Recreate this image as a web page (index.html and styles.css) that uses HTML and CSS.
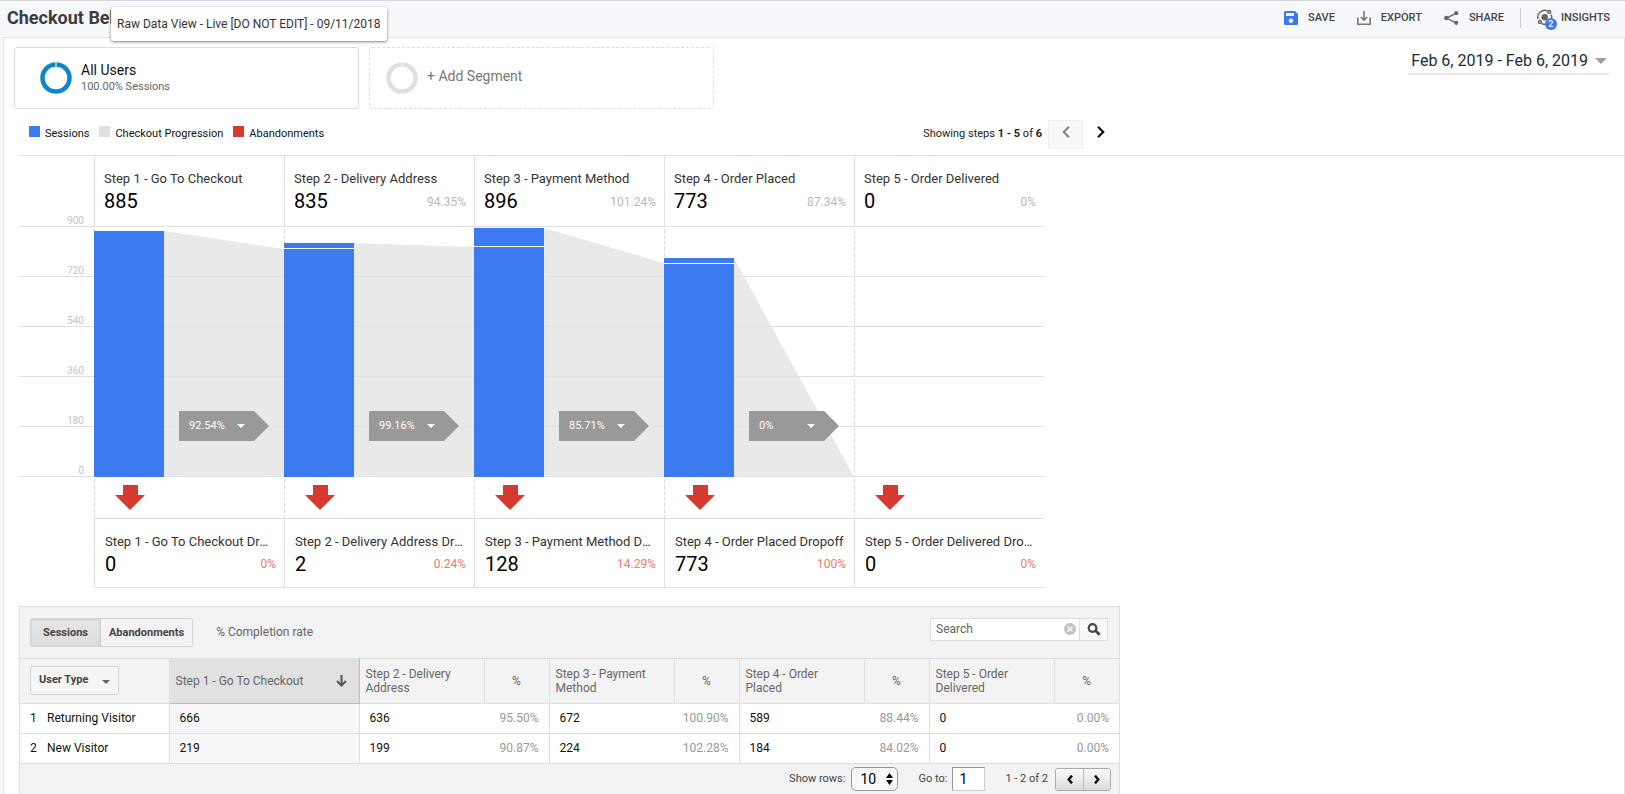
FILE: index.html
```html
<!DOCTYPE html>
<html lang="en">
<head>
<meta charset="utf-8">
<title>Checkout Behavior Analysis</title>
<meta name="viewport" content="width=device-width, initial-scale=1">
<link rel="stylesheet" href="styles.css">
</head>
<body>
<header class="topbar">
  <div class="title-wrap">
    <h1 class="title">Checkout Behavior Analysis</h1>
    <div class="tooltip" role="tooltip">Raw Data View - Live [DO NOT EDIT] - 09/11/2018</div>
  </div>
  <nav class="actions">
    <button class="action" type="button">
      <svg width="14" height="14" viewBox="0 0 14 14"><path fill="#3b78f0" fill-rule="evenodd" d="M1.500 0H11l3 3v9.500a1.500 1.500 0 0 1-1.500 1.500h-11A1.500 1.500 0 0 1 0 12.500v-11A1.500 1.500 0 0 1 1.500 0zM2 2v3h8V2zM7 7.500a2.300 2.300 0 1 0 .01 0z"/></svg>
      SAVE</button>
    <button class="action" type="button">
      <svg width="14" height="14" viewBox="0 0 14 14"><path fill="none" stroke="#757575" stroke-width="1.600" d="M.8 6.500v6.700h12.400V6.500M7 0v9M3.800 6l3.200 3.200L10.200 6"/></svg>
      EXPORT</button>
    <button class="action" type="button">
      <svg width="15" height="14" viewBox="0 0 15 14"><path fill="none" stroke="#666" stroke-width="1.400" d="M12 2.300 2.500 7 12 11.800"/><circle cx="12.200" cy="2.200" r="2.100" fill="#666"/><circle cx="2.300" cy="7" r="2.200" fill="#666"/><circle cx="12.200" cy="11.800" r="2.100" fill="#666"/></svg>
      SHARE</button>
    <span class="divider"></span>
    <button class="action insights" type="button">
      <span class="insight-icon">
        <svg width="16" height="17" viewBox="0 0 16 17"><g fill="none" stroke="#666" stroke-width="1.500"><path d="M1 10A7 7 0 0 1 10.500 1.900M14 5.500a7 7 0 0 1 .5 4.500M4.600 14.300a7 7 0 0 0 5 1"/><circle cx="12.300" cy="2.900" r="1.400"/><circle cx="2.900" cy="13" r="1.400"/></g><circle cx="7.700" cy="8.300" r="3.200" fill="#666"/></svg>
        <span class="badge">2</span>
      </span>
      INSIGHTS</button>
  </nav>
</header>

<main class="panel">
  <section class="segments">
    <button class="segment" type="button">
      <svg class="ring" width="32" height="32" viewBox="0 0 32 32"><circle cx="16" cy="16" r="13.500" fill="none" stroke="#0d85c7" stroke-width="4.500"/><path stroke="#fff" d="M16 0v5"/></svg>
      <span class="segment-text"><span class="segment-name">All Users</span><span class="segment-sub">100.00% Sessions</span></span>
    </button>
    <button class="segment segment-add" type="button">
      <svg class="ring" width="32" height="32" viewBox="0 0 32 32"><circle cx="16" cy="16" r="13.500" fill="none" stroke="#e0e0e0" stroke-width="4.500"/><path stroke="#fff" d="M16 0v5"/></svg>
      <span class="segment-name">+ Add Segment</span>
    </button>
    <button class="date" type="button">Feb 6, 2019 - Feb 6, 2019
      <svg width="12" height="6" viewBox="0 0 12 6"><path fill="#9e9e9e" d="M0 0h12L6 6z"/></svg>
    </button>
  </section>

  <div class="chart-bar">
    <ul class="legend">
      <li><i class="swatch blue"></i>Sessions</li>
      <li><i class="swatch gray"></i>Checkout Progression</li>
      <li><i class="swatch red"></i>Abandonments</li>
    </ul>
    <div class="steps-nav">
      <span>Showing steps <b>1 - 5</b> of <b>6</b></span>
      <button class="nav-btn off" type="button" aria-label="Previous steps"><svg width="8" height="12" viewBox="0 0 8 12"><path fill="none" stroke="#888" stroke-width="2.200" d="M7 .8 1.800 6 7 11.200"/></svg></button>
      <button class="nav-btn" type="button" aria-label="Next steps"><svg width="8" height="12" viewBox="0 0 8 12"><path fill="none" stroke="#111" stroke-width="2.200" d="M1 .8 6.200 6 1 11.200"/></svg></button>
    </div>
  </div>

  <section class="chart-wrap">
    <div class="chart">
      <div class="row heads">
        <div class="axis-top">900</div>
        <div class="cell"><span class="name">Step 1 - Go To Checkout</span><span class="nums"><strong>885</strong></span></div>
        <div class="cell"><span class="name">Step 2 - Delivery Address</span><span class="nums"><strong>835</strong><em>94.35%</em></span></div>
        <div class="cell"><span class="name">Step 3 - Payment Method</span><span class="nums"><strong>896</strong><em>101.24%</em></span></div>
        <div class="cell"><span class="name">Step 4 - Order Placed</span><span class="nums"><strong>773</strong><em>87.34%</em></span></div>
        <div class="cell"><span class="name">Step 5 - Order Delivered</span><span class="nums"><strong>0</strong><em>0%</em></span></div>
      </div>
      <div class="row plot">
        <div class="axis"><span>720</span><span>540</span><span>360</span><span>180</span><span>0</span></div>
        <div class="col">
          <div class="bar" style="height:98.4%"></div>
          <div class="flow"><svg viewBox="0 0 120 250" preserveAspectRatio="none"><path d="M0 4 120 22V250H0z"/></svg>
            <button class="chip" type="button">92.54%<svg width="8" height="4" viewBox="0 0 8 4"><path d="M0 0h8L4 4z"/></svg></button></div>
        </div>
        <div class="col">
          <div class="bar" style="height:93.6%"><i style="top:5px"></i></div>
          <div class="flow"><svg viewBox="0 0 120 250" preserveAspectRatio="none"><path d="M0 16 120 20V250H0z"/></svg>
            <button class="chip" type="button">99.16%<svg width="8" height="4" viewBox="0 0 8 4"><path d="M0 0h8L4 4z"/></svg></button></div>
        </div>
        <div class="col">
          <div class="bar" style="height:99.6%"><i style="top:18px"></i></div>
          <div class="flow"><svg viewBox="0 0 120 250" preserveAspectRatio="none"><path d="M0 1 120 36V250H0z"/></svg>
            <button class="chip" type="button">85.71%<svg width="8" height="4" viewBox="0 0 8 4"><path d="M0 0h8L4 4z"/></svg></button></div>
        </div>
        <div class="col">
          <div class="bar" style="height:87.6%"><i style="top:5px"></i></div>
          <div class="flow"><svg viewBox="0 0 120 250" preserveAspectRatio="none"><path d="M0 31 120 250H0z"/></svg>
            <button class="chip" type="button">0%<svg width="8" height="4" viewBox="0 0 8 4"><path d="M0 0h8L4 4z"/></svg></button></div>
        </div>
        <div class="col"></div>
      </div>
      <div class="row drops">
        <div></div>
        <div class="drop"><svg width="30" height="25" viewBox="0 0 30 25"><path d="M8 0h15v10h7L15 25 0 10h8z"/></svg></div>
        <div class="drop"><svg width="30" height="25" viewBox="0 0 30 25"><path d="M8 0h15v10h7L15 25 0 10h8z"/></svg></div>
        <div class="drop"><svg width="30" height="25" viewBox="0 0 30 25"><path d="M8 0h15v10h7L15 25 0 10h8z"/></svg></div>
        <div class="drop"><svg width="30" height="25" viewBox="0 0 30 25"><path d="M8 0h15v10h7L15 25 0 10h8z"/></svg></div>
        <div class="drop"><svg width="30" height="25" viewBox="0 0 30 25"><path d="M8 0h15v10h7L15 25 0 10h8z"/></svg></div>
      </div>
      <div class="row feet">
        <div></div>
        <div class="cell"><span class="name">Step 1 - Go To Checkout Dropoff</span><span class="nums"><strong>0</strong><em>0%</em></span></div>
        <div class="cell"><span class="name">Step 2 - Delivery Address Dropoff</span><span class="nums"><strong>2</strong><em>0.24%</em></span></div>
        <div class="cell"><span class="name">Step 3 - Payment Method Dropoff</span><span class="nums"><strong>128</strong><em>14.29%</em></span></div>
        <div class="cell"><span class="name">Step 4 - Order Placed Dropoff</span><span class="nums"><strong>773</strong><em>100%</em></span></div>
        <div class="cell"><span class="name">Step 5 - Order Delivered Dropoff</span><span class="nums"><strong>0</strong><em>0%</em></span></div>
      </div>
    </div>
  </section>

  <section class="report">
    <div class="toolbar">
      <div class="toggle">
        <button class="on" type="button">Sessions</button><button type="button">Abandonments</button>
      </div>
      <span class="rate">% Completion rate</span>
      <form class="search">
        <input type="text" placeholder="Search" aria-label="Search">
        <button class="clear" type="button" aria-label="Clear"><svg width="12" height="12" viewBox="0 0 12 12"><circle cx="6" cy="6" r="6" fill="#c2c2c2"/><path stroke="#fff" stroke-width="1.300" d="m3.500 3.500 5 5m0-5-5 5"/></svg></button>
        <button class="go" type="button" aria-label="Run search"><svg width="14" height="13" viewBox="0 0 14 13"><circle cx="5.500" cy="5" r="3.800" fill="none" stroke="#444" stroke-width="2.200"/><path stroke="#444" stroke-width="2.800" d="m8.300 7.600 4.400 4.200"/></svg></button>
      </form>
    </div>
    <table class="data">
      <colgroup><col class="c-type"><col class="c-first"><col class="c-step"><col class="c-pct"><col class="c-step"><col class="c-pct"><col class="c-step"><col class="c-pct"><col class="c-step"><col class="c-pct"></colgroup>
      <thead>
        <tr>
          <th class="type"><button class="dropdown" type="button">User Type <svg width="8" height="4" viewBox="0 0 8 4"><path fill="#666" d="M0 0h8L4 4z"/></svg></button></th>
          <th class="sorted"><span class="sort">Step 1 - Go To Checkout <svg width="11" height="12" viewBox="0 0 11 12"><path fill="none" stroke="#555" stroke-width="2" d="M5.500 0v10.500M1 6l4.500 4.500L10 6"/></svg></span></th>
          <th>Step 2 - Delivery Address</th><th class="pct">%</th>
          <th>Step 3 - Payment Method</th><th class="pct">%</th>
          <th>Step 4 - Order Placed</th><th class="pct">%</th>
          <th>Step 5 - Order Delivered</th><th class="pct">%</th>
        </tr>
      </thead>
      <tbody>
        <tr><td class="who"><span>1</span>Returning Visitor</td><td class="first">666</td><td>636</td><td class="pct">95.50%</td><td>672</td><td class="pct">100.90%</td><td>589</td><td class="pct">88.44%</td><td>0</td><td class="pct">0.00%</td></tr>
        <tr><td class="who"><span>2</span>New Visitor</td><td class="first">219</td><td>199</td><td class="pct">90.87%</td><td>224</td><td class="pct">102.28%</td><td>184</td><td class="pct">84.02%</td><td>0</td><td class="pct">0.00%</td></tr>
      </tbody>
    </table>
    <footer class="pager">
      <label for="rows">Show rows:</label>
      <span class="rows-box">
        <select id="rows"><option>10</option><option>25</option></select>
        <svg width="7" height="12" viewBox="0 0 7 12"><path d="M0 5h7L3.500 0zM0 7h7l-3.500 5z"/></svg>
      </span>
      <label for="goto">Go to:</label>
      <input id="goto" type="text" value="1">
      <span class="range">1 - 2 of 2</span>
      <div class="pages">
        <button type="button" aria-label="Previous page"><svg width="6" height="9" viewBox="0 0 6 9"><path fill="none" stroke="#111" stroke-width="2.400" d="M5 .6 1.700 4.500 5 8.400"/></svg></button><button type="button" aria-label="Next page"><svg width="6" height="9" viewBox="0 0 6 9"><path fill="none" stroke="#111" stroke-width="2.400" d="M1 .6 4.300 4.500 1 8.400"/></svg></button>
      </div>
    </footer>
  </section>
</main>
</body>
</html>
```

FILE: styles.css
```css
* { box-sizing: border-box; }
body {
  margin: 0;
  height: 100vh;
  overflow: hidden;
  display: flex;
  flex-direction: column;
  background: #f6f8fb;
  color: #222;
  font: 12px/16px Roboto, "Liberation Sans", sans-serif;
}
button, input, select { font: inherit; color: inherit; }
button { padding: 0; border: 0; background: none; cursor: pointer; text-align: left; }
svg { display: block; flex: none; }

.topbar {
  flex: none;
  display: flex;
  justify-content: space-between;
  height: 37px;
  padding: 0 15px 3px 7px;
  border-top: 1px solid #d5d7db;
}
.title-wrap { position: relative; display: flex; align-items: center; }
.title { margin: 0; font-size: 18px; line-height: 24px; font-weight: 700; color: #3c3c3c; white-space: nowrap; }
.tooltip {
  position: absolute;
  left: 104px;
  top: 6px;
  z-index: 2;
  padding: 9px 6px;
  border-radius: 3px;
  background: #fff;
  box-shadow: 0 1px 3px rgba(0, 0, 0, .5);
  color: #333;
  white-space: nowrap;
}
.actions { display: flex; align-items: center; gap: 22px; }
.action { display: flex; align-items: center; gap: 10px; font-size: 11px; font-weight: 500; color: #444; }
.divider { width: 1px; height: 20px; margin: 0 -6px; background: #ccc; }
.insights { gap: 8px; }
.insight-icon { position: relative; }
.badge {
  position: absolute;
  left: 8px;
  top: 9px;
  width: 12px;
  height: 12px;
  border-radius: 50%;
  background: #3b78f0;
  color: #fff;
  font-size: 9px;
  line-height: 12px;
  text-align: center;
}

.panel {
  flex: 1 0 auto;
  margin-left: 3px;
  border: 1px solid #e0e2e4;
  border-bottom: 0;
  background: #fff;
}
.segments { display: flex; align-items: flex-start; gap: 10px; padding: 9px 15px 11px 10px; }
.segment {
  display: flex;
  align-items: center;
  gap: 9px;
  flex: 0 1 345px;
  height: 62px;
  padding: 0 25px;
  border: 1px solid #dcdcdc;
  border-radius: 3px;
}
.segment-add { border-style: dashed; padding: 0 16px; color: #777; }
.segment-add .segment-name { padding-bottom: 5px; }
.segment-text { display: flex; flex-direction: column; gap: 1px; }
.segment-name { font-size: 14px; }
.segment-text .segment-name { color: #111; }
.segment-sub { font-size: 11px; color: #666; }
.date {
  display: flex;
  align-items: center;
  gap: 7px;
  margin-left: auto;
  padding: 2px 2px 0 3px;
  border-bottom: 2px solid #e8e8e8;
  font-size: 16px;
  line-height: 24px;
  color: #212b36;
}

.chart-bar {
  display: flex;
  justify-content: space-between;
  max-width: 1114px;
  height: 35px;
  padding-left: 25px;
}
.legend { display: flex; gap: 10px; margin: 0; padding: 6px 0 0; list-style: none; font-size: 11px; color: #111; }
.legend li { display: flex; gap: 5px; }
.swatch { width: 11px; height: 11px; }
.blue { background: #3b7af1; }
.gray { background: #e0e0e0; }
.red { background: #d63a2f; }
.steps-nav { display: flex; align-items: flex-start; font-size: 11px; color: #222; }
.steps-nav span { padding: 6px 6px 0 0; }
.nav-btn { display: flex; justify-content: center; width: 35px; height: 29px; padding-top: 5px; border: 1px solid transparent; }
.nav-btn.off { background: #f8f8f8; border-color: #f0f0f0; }

.chart-wrap { margin-left: 15px; border-top: 1px solid #e0e0e0; }
.chart { max-width: 1025px; }
.row { display: grid; grid-template-columns: 75px repeat(5, minmax(0, 1fr)); }
.heads { border-bottom: 1px solid #e0e0e0; height: 71px; }
.axis-top, .axis { color: #c4c4c4; font-size: 10px; line-height: 10px; text-align: right; padding-right: 10px; }
.axis-top { align-self: end; }
.axis { display: flex; flex-direction: column; }
.axis span { height: 50px; padding-top: 39px; }
.cell { display: flex; flex-direction: column; padding: 15px 8px 0 9px; border-left: 1px solid #e0e0e0; }
.name { overflow: hidden; font-size: 13px; color: #333; white-space: nowrap; text-overflow: ellipsis; }
.nums { display: flex; align-items: center; justify-content: space-between; height: 27px; }
.nums strong { font-size: 20px; font-weight: 400; color: #000; }
.nums em { font-style: normal; color: #b9b9b9; padding-top: 3px; }
.plot {
  height: 250px;
  background: repeating-linear-gradient(#fff 0 49px, #e0e0e0 49px 50px);
}
.col, .drop { background: repeating-linear-gradient(transparent 0 2px, #dcdcdc 2px 6px) 0 0 / 1px 100% no-repeat; }
.col { display: flex; align-items: flex-end; }
.bar { position: relative; flex: 0 0 70px; background: #3b7af1; }
.bar i { position: absolute; left: 0; right: 0; height: 1px; background: #fff; }
.flow { position: relative; flex: 1; height: 100%; }
.flow > svg { width: 100%; height: 100%; fill: #e3e3e3; fill-opacity: .8; }
.chip {
  position: absolute;
  left: 15px;
  bottom: 36px;
  display: flex;
  align-items: center;
  justify-content: space-between;
  width: 90px;
  height: 30px;
  padding: 0 24px 0 10px;
  background: #999;
  clip-path: polygon(0 0, 75px 0, 100% 50%, 75px 100%, 0 100%);
  color: #fff;
  font-size: 11px;
}
.chip svg { fill: #fff; }
.drops { height: 41px; }
.drop { padding: 8px 0 0 21px; }
.drop svg { fill: #d63a2f; }
.feet { height: 70px; }
.feet .cell { padding: 15px 8px 0 10px; border-top: 1px solid #e0e0e0; border-bottom: 1px solid #e0e0e0; }
.feet .name { max-width: 169px; }
.feet em { color: #e87c74; padding-top: 0; }

.report { max-width: 1101px; margin: 18px 0 0 15px; border: 1px solid #dedede; background: #f3f3f3; }
.toolbar { display: flex; align-items: flex-start; padding: 11px 11px 11px 10px; }
.toggle { display: flex; border: 1px solid #d4d4d4; border-radius: 2px; }
.toggle button { height: 27px; padding: 0 8px; font-size: 11px; font-weight: 700; color: #444; }
.toggle .on { padding: 0 12px; border-right: 1px solid #ccc; background: linear-gradient(#e6e6e6, #dcdcdc); box-shadow: inset 0 1px 2px rgba(0, 0, 0, .12); }
.rate { padding: 6px 0 0 23px; color: #666; }
.search { position: relative; display: flex; margin-left: auto; }
.search input { width: 150px; height: 23px; padding: 0 24px 2px 5px; border: 1px solid #dcdcdc; background: #fff; outline: 0; }
.search input::placeholder { color: #666; opacity: 1; }
.clear { position: absolute; left: 134px; top: 5px; }
.go { display: flex; align-items: center; justify-content: center; width: 28px; border: 1px solid #dcdcdc; border-left: 0; background: #f8f8f8; }

.data { width: 100%; border-collapse: collapse; table-layout: fixed; background: #fff; }
.c-type { width: 149px; }
.c-first { width: 190px; }
.c-pct { width: 65px; }
.data th, .data td { border: 1px solid #dedede; }
.data th:first-child, .data td:first-child { border-left: 0; }
.data th:last-child, .data td:last-child { border-right: 0; }
.data th { height: 45px; padding: 0 20px 0 6px; background: #f3f3f3; font-weight: 400; line-height: 14px; text-align: left; color: #666; }
.data th.pct { padding: 0; text-align: center; }
.data th.type { padding: 0 0 2px 10px; }
.data th.sorted { padding: 0 12px 0 6px; background: #e1e1e1; border-color: #dedede #bcbcbc #bcbcbc; }
.sort { display: flex; align-items: center; justify-content: space-between; }
.data td { height: 30px; padding: 0 10px 1px; border-right: 0; color: #111; }
.data td.pct { border-left: 0; padding: 0 10px 1px 0; text-align: right; color: #999; }
.data td.first { background: #f7f7f7; }
.data td.who span { display: inline-block; width: 17px; }
.dropdown { display: flex; align-items: center; gap: 14px; height: 29px; padding: 0 8px; border: 1px solid #d4d4d4; border-radius: 2px; background: #f5f5f5; font-size: 11px; font-weight: 700; color: #444; }
.dropdown svg { margin-top: 3px; }

.pager { display: flex; align-items: center; justify-content: flex-end; padding: 3px 8px 7px; font-size: 11px; color: #444; }
.rows-box { position: relative; margin: 0 20px 0 6px; }
.rows-box select { appearance: none; width: 47px; height: 24px; padding: 0 8px; border: 1px solid #999; border-radius: 5px; background: #f8f8f8; font-size: 14px; color: #000; }
.rows-box svg { position: absolute; right: 5px; top: 6px; pointer-events: none; }
.pager input { width: 33px; height: 24px; margin-left: 5px; padding: 0 6px; border: 1px solid #ccc; border-top-color: #999; border-left-color: #999; background: #fff; font-size: 14px; color: #000; }
.range { margin: 0 7px 0 20px; }
.pages { display: flex; border: 1px solid #aaa; border-radius: 3px; overflow: hidden; }
.pages button { display: flex; align-items: center; justify-content: center; width: 27px; height: 21px; background: linear-gradient(#fafafa, #dcdcdc); }
.pages button + button { border-left: 1px solid #bbb; }
```
